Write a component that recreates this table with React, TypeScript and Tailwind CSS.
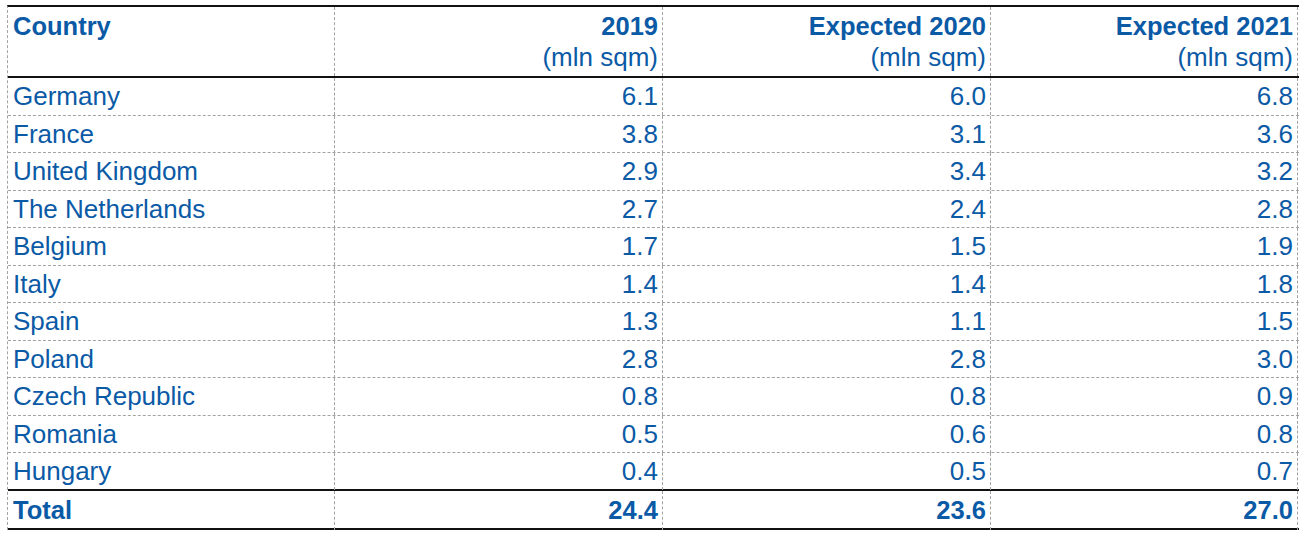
import React from 'react';

type Row = { country: string; y2019: string; y2020: string; y2021: string };

const rows: Row[] = [
  { country: 'Germany', y2019: '6.1', y2020: '6.0', y2021: '6.8' },
  { country: 'France', y2019: '3.8', y2020: '3.1', y2021: '3.6' },
  { country: 'United Kingdom', y2019: '2.9', y2020: '3.4', y2021: '3.2' },
  { country: 'The Netherlands', y2019: '2.7', y2020: '2.4', y2021: '2.8' },
  { country: 'Belgium', y2019: '1.7', y2020: '1.5', y2021: '1.9' },
  { country: 'Italy', y2019: '1.4', y2020: '1.4', y2021: '1.8' },
  { country: 'Spain', y2019: '1.3', y2020: '1.1', y2021: '1.5' },
  { country: 'Poland', y2019: '2.8', y2020: '2.8', y2021: '3.0' },
  { country: 'Czech Republic', y2019: '0.8', y2020: '0.8', y2021: '0.9' },
  { country: 'Romania', y2019: '0.5', y2020: '0.6', y2021: '0.8' },
  { country: 'Hungary', y2019: '0.4', y2020: '0.5', y2021: '0.7' },
];

const grid = 'grid grid-cols-[327px_328px_328px_307px]';
const cell = 'border-r border-dashed border-[#a3a3a3]';
const solidBottom = 'border-b-2 border-b-[#111] [border-bottom-style:solid]';

export default function App() {
  return (
    <div className="bg-white w-[1310px] h-[539px] pt-[5px] pl-[7px] font-['Liberation_Sans',Arial,sans-serif] text-[26px] text-[#0b5aa6]">
      <div className="w-[1292px] border-t-2 border-t-[#111] [border-top-style:solid] border-l border-l-[#a3a3a3] [border-left-style:dashed]">
        {/* Header */}
        <div className={`${grid} h-[71px] ${solidBottom} leading-[31px]`}>
          <div className={`${cell} pl-[5px] pt-[4px] font-bold text-[25.5px]`}>Country</div>
          {['2019', 'Expected 2020', 'Expected 2021'].map((h) => (
            <div key={h} className={`${cell} pr-[4px] pt-[4px] text-right`}>
              <div className="font-bold text-[25.5px]">{h}</div>
              <div>(mln sqm)</div>
            </div>
          ))}
        </div>

        {/* Body rows */}
        {rows.map((r, i) => (
          <div
            key={r.country}
            className={`${grid} h-[37.5px] leading-[37px] ${
              i === rows.length - 1 ? solidBottom : 'border-b border-b-[#a3a3a3] [border-bottom-style:dashed]'
            }`}
          >
            <div className={`${cell} pl-[5px]`}>{r.country}</div>
            <div className={`${cell} pr-[4px] text-right`}>{r.y2019}</div>
            <div className={`${cell} pr-[4px] text-right`}>{r.y2020}</div>
            <div className={`${cell} pr-[4px] text-right`}>{r.y2021}</div>
          </div>
        ))}

        {/* Total */}
        <div className={`${grid} h-[39px] leading-[39px] font-bold text-[25.5px] ${solidBottom}`}>
          <div className={`${cell} pl-[5px]`}>Total</div>
          <div className={`${cell} pr-[4px] text-right`}>24.4</div>
          <div className={`${cell} pr-[4px] text-right`}>23.6</div>
          <div className={`${cell} pr-[4px] text-right`}>27.0</div>
        </div>
      </div>
    </div>
  );
}
